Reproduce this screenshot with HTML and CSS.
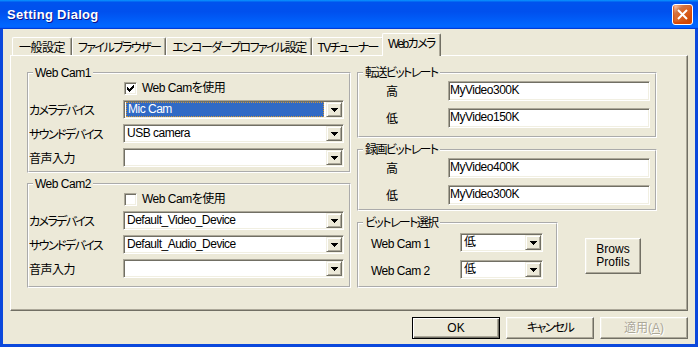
FILE: index.html
```html
<!DOCTYPE html>
<html lang="ja">
<head>
    <meta charset="UTF-8">
    <meta name="viewport" content="width=device-width, initial-scale=1.0">
    <title>Setting Dialog</title>
    <link rel="stylesheet" href="styles.css">
</head>
<body>

<div class="window">
    <div class="titlebar">
        <span class="title">Setting Dialog</span>
        <button class="close" aria-label="閉じる">
            <svg width="11" height="11" viewBox="0 0 11 11"><path d="M1 1l9 9M10 1l-9 9" stroke="#fff" stroke-width="2"/></svg>
        </button>
    </div>

    <div class="frame">
        <div class="tabs">
            <div class="tab kanji">一般設定</div>
            <div class="tab">ファイルブラウザー</div>
            <div class="tab">エンコーダープロファイル設定</div>
            <div class="tab">TVチューナー</div>
            <div class="tab active">Webカメラ</div>
        </div>

        <div class="panel">
            <div class="col-left">
                <fieldset class="group cam1">
                    <legend>Web Cam1</legend>
                    <div class="cam-rows">
                        <label class="check">
                            <span class="box"><svg width="7" height="7" viewBox="0 0 7 7" shape-rendering="crispEdges"><path d="M0 2h1v3H0zM1 3h1v3H1zM2 4h1v3H2zM3 3h1v3H3zM4 2h1v3H4zM5 1h1v3H5zM6 0h1v3H6z"/></svg></span>
                            Web Camを使用
                        </label>
                        <span class="lbl kana">カメラデバイス</span>
                        <div class="combo">
                            <span class="value selected">Mic Cam</span>
                            <span class="arrow"><svg width="7" height="4" viewBox="0 0 7 4" shape-rendering="crispEdges"><path d="M0 0h7v1H6v1H5v1H4v1H3V3H2V2H1V1H0z"/></svg></span>
                        </div>
                        <span class="lbl kana">サウンドデバイス</span>
                        <div class="combo">
                            <span class="value">USB camera</span>
                            <span class="arrow"><svg width="7" height="4" viewBox="0 0 7 4" shape-rendering="crispEdges"><path d="M0 0h7v1H6v1H5v1H4v1H3V3H2V2H1V1H0z"/></svg></span>
                        </div>
                        <span class="lbl">音声入力</span>
                        <div class="combo">
                            <span class="value"></span>
                            <span class="arrow"><svg width="7" height="4" viewBox="0 0 7 4" shape-rendering="crispEdges"><path d="M0 0h7v1H6v1H5v1H4v1H3V3H2V2H1V1H0z"/></svg></span>
                        </div>
                    </div>
                </fieldset>

                <fieldset class="group cam2">
                    <legend>Web Cam2</legend>
                    <div class="cam-rows">
                        <label class="check">
                            <span class="box"></span>
                            Web Camを使用
                        </label>
                        <span class="lbl kana">カメラデバイス</span>
                        <div class="combo">
                            <span class="value">Default_Video_Device</span>
                            <span class="arrow"><svg width="7" height="4" viewBox="0 0 7 4" shape-rendering="crispEdges"><path d="M0 0h7v1H6v1H5v1H4v1H3V3H2V2H1V1H0z"/></svg></span>
                        </div>
                        <span class="lbl kana">サウンドデバイス</span>
                        <div class="combo">
                            <span class="value">Default_Audio_Device</span>
                            <span class="arrow"><svg width="7" height="4" viewBox="0 0 7 4" shape-rendering="crispEdges"><path d="M0 0h7v1H6v1H5v1H4v1H3V3H2V2H1V1H0z"/></svg></span>
                        </div>
                        <span class="lbl">音声入力</span>
                        <div class="combo">
                            <span class="value"></span>
                            <span class="arrow"><svg width="7" height="4" viewBox="0 0 7 4" shape-rendering="crispEdges"><path d="M0 0h7v1H6v1H5v1H4v1H3V3H2V2H1V1H0z"/></svg></span>
                        </div>
                    </div>
                </fieldset>
            </div>

            <div class="col-right">
                <fieldset class="group send">
                    <legend class="kana">転送ビットレート</legend>
                    <div class="rate-rows">
                        <span class="lbl">高</span>
                        <input class="field" type="text" value="MyVideo300K">
                        <span class="lbl">低</span>
                        <input class="field" type="text" value="MyVideo150K">
                    </div>
                </fieldset>

                <fieldset class="group record">
                    <legend class="kana">録画ビットレート</legend>
                    <div class="rate-rows">
                        <span class="lbl">高</span>
                        <input class="field" type="text" value="MyVideo400K">
                        <span class="lbl">低</span>
                        <input class="field" type="text" value="MyVideo300K">
                    </div>
                </fieldset>

                <div class="select-row">
                    <fieldset class="group choose">
                        <legend class="kana">ビットレート選択</legend>
                        <div class="choose-rows">
                            <span class="lbl">Web Cam 1</span>
                            <div class="combo">
                                <span class="value">低</span>
                                <span class="arrow"><svg width="7" height="4" viewBox="0 0 7 4" shape-rendering="crispEdges"><path d="M0 0h7v1H6v1H5v1H4v1H3V3H2V2H1V1H0z"/></svg></span>
                            </div>
                            <span class="lbl">Web Cam 2</span>
                            <div class="combo">
                                <span class="value">低</span>
                                <span class="arrow"><svg width="7" height="4" viewBox="0 0 7 4" shape-rendering="crispEdges"><path d="M0 0h7v1H6v1H5v1H4v1H3V3H2V2H1V1H0z"/></svg></span>
                            </div>
                        </div>
                    </fieldset>
                    <button class="btn brows">Brows<br>Profils</button>
                </div>
            </div>
        </div>

        <div class="buttons">
            <button class="btn default">OK</button>
            <button class="btn kana">キャンセル</button>
            <button class="btn" disabled>適用(<u>A</u>)</button>
        </div>
    </div>
</div>

</body>
</html>
```

FILE: styles.css
```css
* { box-sizing: border-box; }

body { margin: 0; background: #fff; color: #000; font: 12px/14px "Liberation Sans", "Noto Sans CJK JP", sans-serif; font-feature-settings: "palt"; letter-spacing: -0.5px; }

.window { width: 698px; height: 347px; display: flex; flex-direction: column; }

/* title bar */
.titlebar { height: 29px; flex: none; display: flex; align-items: center; justify-content: space-between; padding: 0 5px 0 7px; background: linear-gradient(180deg, #0997ff, #0053ee 8%, #0050ee 40%, #0066ff 88%, #0066ff 93%, #005bff 95%, #003dd7 96%, #003dd7); }
.title { color: #fff; font: bold 13px/16px "Liberation Sans", sans-serif; letter-spacing: 0.3px; text-shadow: 1px 1px #0f1089; }
.close { width: 21px; height: 21px; padding: 0; border: 1px solid #fff; border-radius: 3px; display: flex; align-items: center; justify-content: center; background: radial-gradient(circle at 90% 90%, #cc4600 0%, #dc6527 55%, #cd7546 70%, #ffccb2 90%, #fff 100%); box-shadow: inset 0 -1px 2px 1px #da4600; }

.frame { flex: 1; display: flex; flex-direction: column; padding: 4px 7px 0; background: #ece9d8; border: 3px solid #0b48dc; border-top: 0; }

/* kana in MS UI Gothic is narrow, so squeeze the katakana-heavy texts */
.tab, .kana { letter-spacing: -1.6px; }

/* tabs */
.tabs { display: flex; align-items: flex-end; height: 22px; padding-left: 2px; }
.tab { height: 18px; padding: 3px 5px 0; white-space: nowrap; border-top: 1px solid #fff; border-left: 1px solid #fff; border-right: 1px solid #716f64; border-radius: 2px 2px 0 0; box-shadow: inset -1px 0 #aca899; }
.tab.kanji { letter-spacing: -0.5px; padding: 3px 6px 0; }
.tab.active { height: 23px; margin: 0 -2px -1px; padding: 3px 5px 0; position: relative; z-index: 1; background: #ece9d8; }

.panel { height: 256px; display: flex; gap: 6px; padding: 10px 0 0 16px; border: 1px solid; border-color: #fff #716f64 #716f64 #fff; box-shadow: inset -1px -1px #aca899; }

/* group boxes */
.group { margin: 0; padding: 0; min-width: 0; border: 2px groove #fff; }
.group legend { margin-left: 4px; padding: 0 2px; line-height: 14px; }

.col-left { width: 324px; display: flex; flex-direction: column; gap: 4px; }
.cam1 { height: 107px; }
.cam2 { height: 111px; }
.cam-rows { display: grid; grid-template-columns: 94px 1fr; grid-template-rows: 14px 19px 19px 19px; row-gap: 5px; align-items: center; padding: 1px 5px 0 0; }

.col-right { width: 300px; display: flex; flex-direction: column; gap: 5px; }
.send { height: 72px; }
.record { height: 68px; }
.rate-rows { display: grid; grid-template-columns: 62px 1fr; grid-template-rows: 20px 20px; row-gap: 7px; align-items: center; padding: 1px 5px 0 27px; }

.select-row { display: flex; align-items: flex-start; }
.choose { width: 201px; height: 72px; }
.choose-rows { display: grid; grid-template-columns: 89px 83px; grid-template-rows: 19px 19px; row-gap: 8px; align-items: center; padding: 3px 0 0 12px; }

.lbl { white-space: nowrap; padding-top: 2px; }

/* checkbox */
.check { grid-column: 2; display: flex; align-items: center; gap: 5px; margin-left: 1px; white-space: nowrap; }
.box { width: 13px; height: 13px; display: flex; align-items: center; justify-content: center; background: #fff; border: 1px solid; border-color: #aca899 #fff #fff #aca899; box-shadow: inset 1px 1px #716f64, inset -1px -1px #f1efe2; }

/* combo boxes and edits */
.combo { height: 19px; display: flex; padding: 1px; background: #fff; border: 1px solid; border-color: #aca899 #fff #fff #aca899; box-shadow: inset 1px 1px #716f64, inset -1px -1px #f1efe2; }
.combo .value { flex: 1; padding-left: 2px; line-height: 15px; white-space: nowrap; overflow: hidden; }
.combo .value.selected { margin: 0 2px 0 1px; padding-left: 1px; line-height: 13px; color: #fff; background: #316ac5; border: 1px dotted #ce953a; }
.arrow { width: 16px; display: flex; align-items: center; justify-content: center; background: #ece9d8; border: 1px solid; border-color: #f1efe2 #716f64 #716f64 #f1efe2; box-shadow: inset 1px 1px #fff, inset -1px -1px #aca899; }

.field { width: 100%; height: 20px; padding: 0 1px 3px; font: inherit; letter-spacing: inherit; color: #000; background: #fff; border: 1px solid; border-color: #aca899 #fff #fff #aca899; box-shadow: inset 1px 1px #716f64, inset -1px -1px #f1efe2; outline: none; }

/* push buttons */
.btn { width: 88px; height: 22px; padding: 0; font: inherit; color: #000; background: #ece9d8; border: 1px solid; border-color: #fff #716f64 #716f64 #fff; box-shadow: inset -1px -1px #aca899, inset 1px 1px #f1efe2; }
.btn.default { border-color: #000; box-shadow: inset 1px 1px #fff, inset -1px -1px #716f64, inset -2px -2px #aca899; }
.btn.kana { letter-spacing: -1.6px; }
.btn:disabled { color: #aca899; text-shadow: 1px 1px #fff; }
.brows { width: 56px; height: 36px; margin: 22px 0 0 27px; line-height: 13px; }

.buttons { display: flex; justify-content: flex-end; gap: 6px; margin-top: 6px; }
```
